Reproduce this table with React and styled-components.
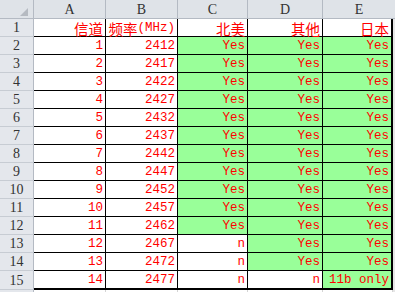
import React from 'react';
import styled, { createGlobalStyle } from 'styled-components';

const Global = createGlobalStyle`
  html, body { margin: 0; padding: 0; background: #fff; }
  body { width: 395px; height: 292px; overflow: hidden; }
  * { box-sizing: border-box; }
`;

const Sheet = styled.div`
  display: grid;
  grid-template-columns: 34px 72px 72px 70px 75px 70px 2px;
  grid-template-rows: 19px repeat(14, 18px) 19px 2px;
  width: 395px;
  height: 292px;
  overflow: hidden;
  background: #fff;
`;

const Corner = styled.div`
  display: flex;
  justify-content: flex-end;
  align-items: flex-end;
  padding: 0 5px 2px 0;
  background: #dfe3e8;
  border-right: 1px solid #b4bac3;
  border-bottom: 1px solid #b4bac3;
`;

const ColHead = styled.div`
  grid-column: span ${p => p.$span || 1};
  display: flex;
  align-items: center;
  justify-content: center;
  background: #dfe3e8;
  border-right: ${p => (p.$span > 1 ? 'none' : '1px solid #b4bac3')};
  border-bottom: 1px solid #b4bac3;
  color: #333;
  font: 14px "Liberation Serif", serif;
  padding-top: 1px;
`;

const RowHead = styled.div`
  display: flex;
  align-items: center;
  justify-content: center;
  background: #e4e7ec;
  border-right: 1px solid #b4bac3;
  border-bottom: 1px solid #c7ccd3;
  color: #333;
  font: 14px "Liberation Serif", serif;
  padding-top: 1px;
`;

const Cell = styled.div`
  display: flex;
  align-items: flex-end;
  justify-content: flex-end;
  padding: 0 2px 0 0;
  background: ${p => (p.$fill ? '#99ff99' : '#fff')};
  border-right: ${p => (p.$edge ? 2 : 1)}px solid #000;
  border-bottom: ${p => (p.$base ? 2 : 1)}px solid #000;
  color: #f00;
  font: 12.5px/15px "Liberation Mono", monospace;
  white-space: nowrap;
`;

const Han = styled.span`
  font: 14.5px/15px "Noto Sans CJK SC", sans-serif;
`;

const Margin = styled.div`
  background: #e6e6e6;
`;

const TailHead = styled.div`
  background: #e4e7ec;
  border-right: 1px solid #b4bac3;
`;

const TailCell = styled.div`
  background: #fff;
  border-right: 1px solid #d4d4d4;
`;

const rows = [];
for (let ch = 1; ch <= 14; ch++) {
  const freq = ch === 14 ? 2477 : 2407 + ch * 5;
  let na = 'Yes';
  let other = 'Yes';
  let jp = 'Yes';
  if (ch >= 12) na = 'n';
  if (ch === 14) {
    other = 'n';
    jp = '11b only';
  }
  rows.push([String(ch), String(freq), na, other, jp]);
}

const titles = [
  <Han>信道</Han>,
  <>
    <Han>频率</Han>(MHz)
  </>,
  <Han>北美</Han>,
  <Han>其他</Han>,
  <Han>日本</Han>,
];

const letters = ['A', 'B', 'C', 'D', 'E'];

export default function App() {
  const last = rows.length + 1;
  return (
    <>
      <Global />
      <Sheet>
        <Corner>
          <svg width="8" height="8" viewBox="0 0 8 8">
            <polygon points="8,0 8,8 0,8" fill="#b5bac1" />
          </svg>
        </Corner>
        {letters.map((l, i) => (
          <ColHead key={l} $span={i === 4 ? 2 : 1}>
            {l}
          </ColHead>
        ))}

        <RowHead>1</RowHead>
        {titles.map((t, i) => (
          <Cell key={i} $edge={i === 4}>
            {t}
          </Cell>
        ))}
        <Margin />

        {rows.map((r, idx) => {
          const n = idx + 2;
          const base = n === last;
          return (
            <React.Fragment key={n}>
              <RowHead>{n}</RowHead>
              {r.map((v, i) => (
                <Cell key={i} $fill={i >= 2 && v !== 'n'} $edge={i === 4} $base={base}>
                  {v}
                </Cell>
              ))}
              <Margin />
            </React.Fragment>
          );
        })}

        <TailHead />
        <TailCell />
        <TailCell />
        <TailCell />
        <TailCell />
        <TailCell />
        <Margin />
      </Sheet>
    </>
  );
}
